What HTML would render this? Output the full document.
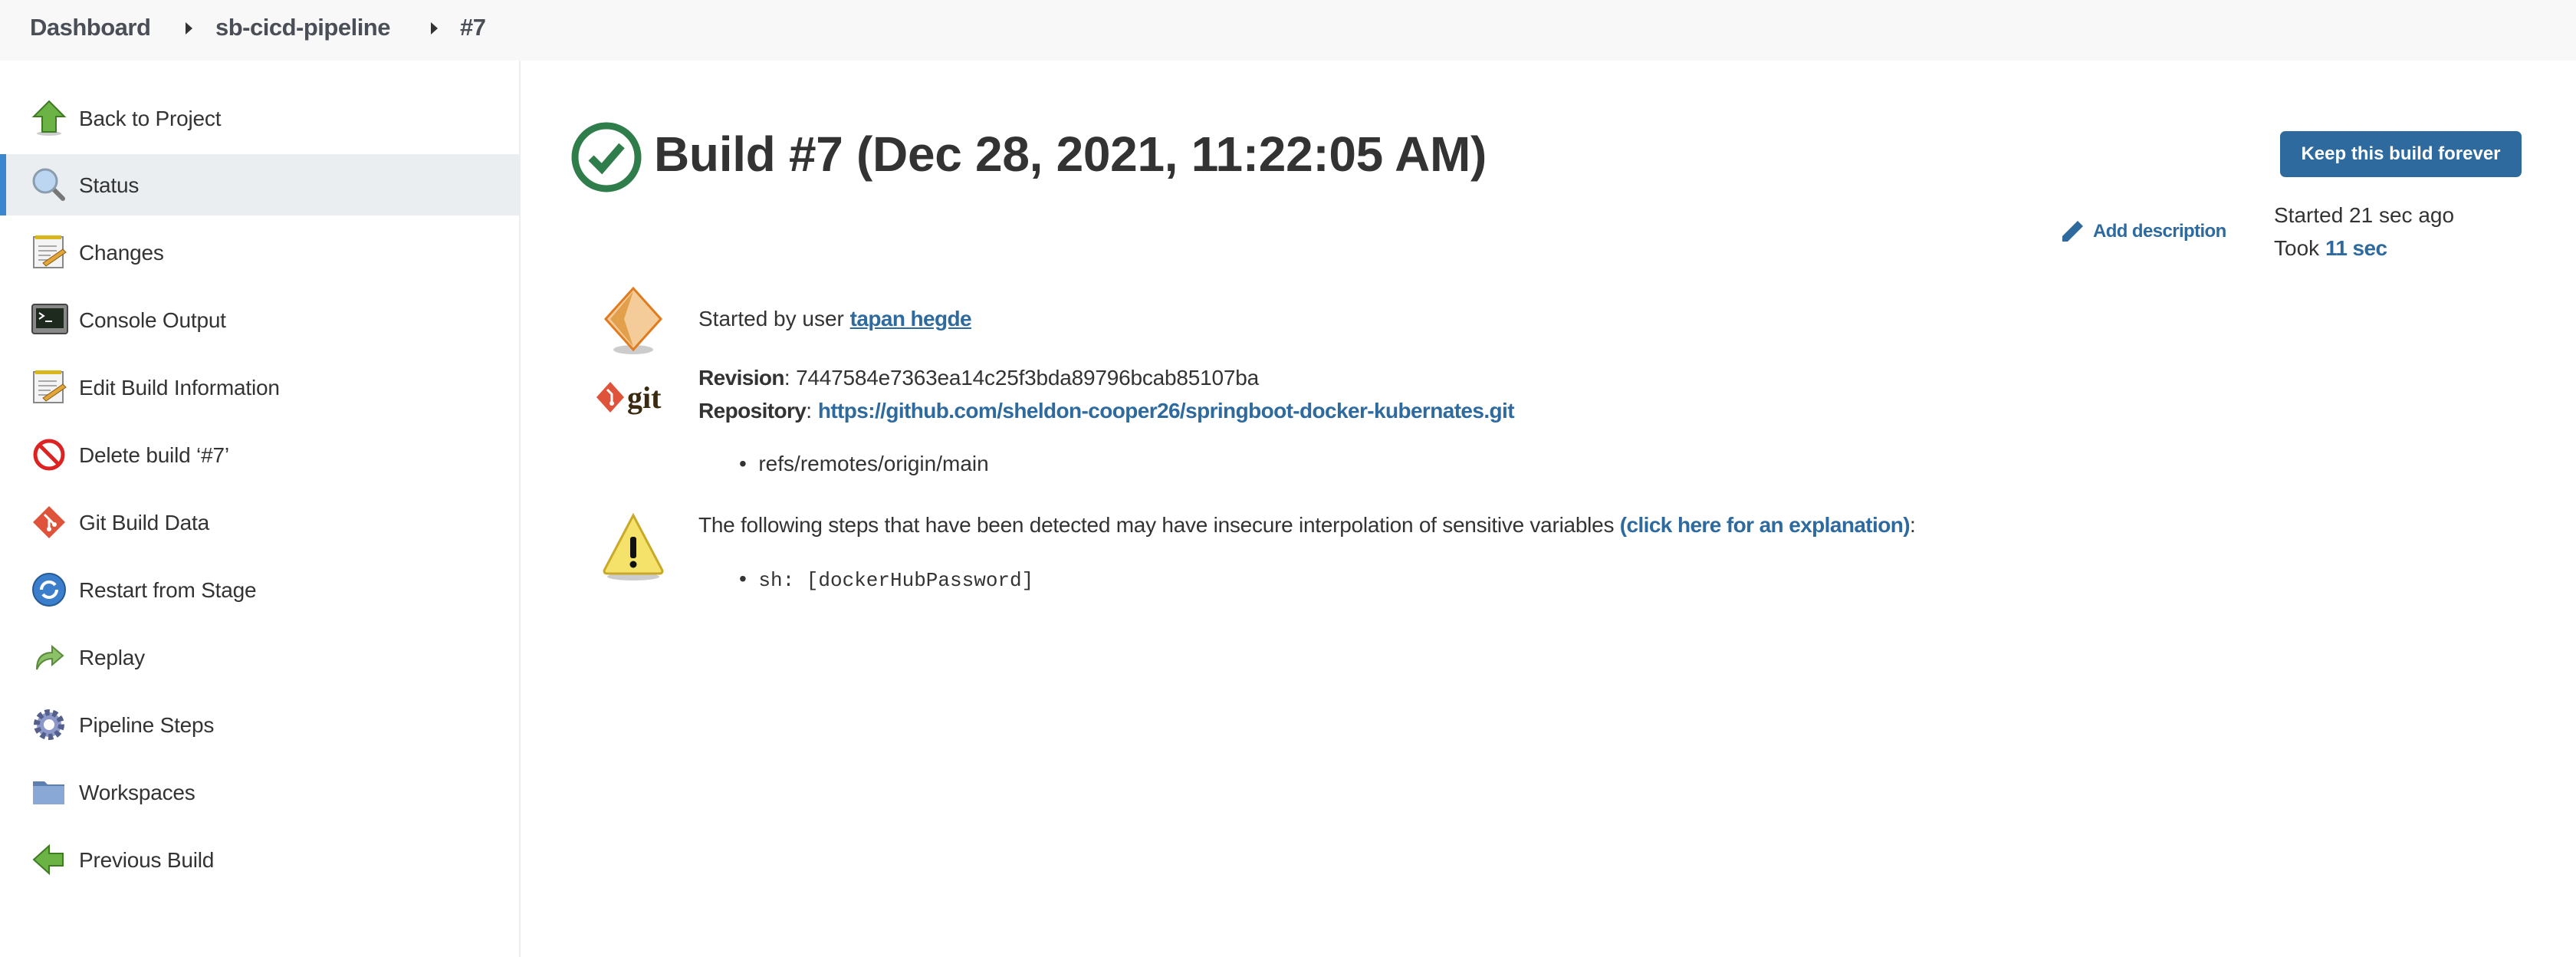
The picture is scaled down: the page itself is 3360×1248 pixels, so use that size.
<!DOCTYPE html>
<html><head><meta charset="utf-8"><style>
*{margin:0;padding:0;box-sizing:border-box}
body{width:3360px;height:1248px;background:#fff;font-family:"Liberation Sans",Arial,sans-serif;color:#333;position:relative;overflow:hidden}
.hdr{position:absolute;left:0;top:0;width:3360px;height:79px;background:#f8f8f8}
.bc{position:absolute;top:18px;font-size:31px;font-weight:bold;color:#4a4f57;letter-spacing:-0.5px}
.tri{position:absolute;top:29px;width:0;height:0;border-top:8px solid transparent;border-bottom:8px solid transparent;border-left:9px solid #333}
.side{position:absolute;left:0;top:79px;width:679px;height:1169px;border-right:2px solid #eceef0}
.it{position:absolute;left:0;width:677px;height:80px}
.it span{position:absolute;left:103px;top:25px;font-size:28px;color:#333;letter-spacing:-0.2px}
.it svg{position:absolute;left:40px;top:16px}
.sel{background:#eaeef1}
.sel:before{content:"";position:absolute;left:0;top:0;width:8px;height:80px;background:#3a87d0}
.t{position:absolute;font-size:28px;color:#333;white-space:nowrap}
a{color:#2e6a9e;text-decoration:none;font-weight:bold}
b,a{letter-spacing:-0.6px}
</style></head><body>
<div class="hdr">
<div class="bc" style="left:39px">Dashboard</div>
<div class="tri" style="left:242px"></div>
<div class="bc" style="left:281px">sb-cicd-pipeline</div>
<div class="tri" style="left:562px"></div>
<div class="bc" style="left:600px">#7</div>
</div>
<div class="side">
<div class="it" style="top:35px"><svg width="48" height="48" viewBox="0 0 48 48"><ellipse cx="24" cy="44" rx="16" ry="3" fill="#ccc"/><path d="M24 2 L44 22 H33 V42 H15 V22 H4 Z" fill="#6ab344" stroke="#3f7a24" stroke-width="2"/></svg><span>Back to Project</span></div>
<div class="it sel" style="top:122px"><svg width="48" height="48" viewBox="0 0 48 48"><line x1="28" y1="28" x2="42" y2="42" stroke="#777" stroke-width="6" stroke-linecap="round"/><circle cx="19" cy="19" r="15" fill="#bcd6f2" stroke="#8a9cae" stroke-width="3"/></svg><span>Status</span></div>
<div class="it" style="top:210px"><svg width="48" height="48" viewBox="0 0 48 48"><rect x="4" y="4" width="38" height="40" fill="#f4f4f4" stroke="#888" stroke-width="2"/><rect x="6" y="2" width="34" height="5" fill="#d8b620"/><path d="M10 16H34M10 22H34M10 28H26M10 34H22" stroke="#aaa" stroke-width="2"/><path d="M16 38 L42 20 L46 24 L20 42 Z" fill="#e2a53c" stroke="#8a5a10"/></svg><span>Changes</span></div>
<div class="it" style="top:298px"><svg width="50" height="48" viewBox="0 0 50 48"><rect x="2" y="4" width="46" height="38" rx="3" fill="#888" stroke="#444" stroke-width="2"/><rect x="7" y="9" width="36" height="26" fill="#1d2a1d"/><path d="M11 15 L17 19 L11 23 M19 26 H28" stroke="#fff" stroke-width="2" fill="none"/></svg><span>Console Output</span></div>
<div class="it" style="top:386px"><svg width="48" height="48" viewBox="0 0 48 48"><rect x="4" y="4" width="38" height="40" fill="#f4f4f4" stroke="#888" stroke-width="2"/><rect x="6" y="2" width="34" height="5" fill="#d8b620"/><path d="M10 16H34M10 22H34M10 28H26M10 34H22" stroke="#aaa" stroke-width="2"/><path d="M16 38 L42 20 L46 24 L20 42 Z" fill="#e2a53c" stroke="#8a5a10"/></svg><span>Edit Build Information</span></div>
<div class="it" style="top:474px"><svg width="48" height="48" viewBox="0 0 48 48"><circle cx="24" cy="24" r="18" fill="#fff" stroke="#d22" stroke-width="5"/><line x1="11" y1="11" x2="37" y2="37" stroke="#d22" stroke-width="5"/></svg><span>Delete build ‘#7’</span></div>
<div class="it" style="top:562px"><svg width="48" height="48" viewBox="0 0 48 48"><path d="M24 3 L45 24 L24 45 L3 24 Z" fill="#e0533b"/><path d="M18 14 L24 20 V32 M24 20 L31 27" stroke="#fff" stroke-width="3" fill="none"/><circle cx="24" cy="33" r="3" fill="#fff"/><circle cx="31" cy="27" r="3" fill="#fff"/></svg><span>Git Build Data</span></div>
<div class="it" style="top:650px"><svg width="48" height="48" viewBox="0 0 48 48"><circle cx="24" cy="24" r="21" fill="#3b7fcc" stroke="#245a95" stroke-width="2"/><path d="M14 24 A10 10 0 0 1 32 18 M34 24 A10 10 0 0 1 16 30" stroke="#fff" stroke-width="4" fill="none"/></svg><span>Restart from Stage</span></div>
<div class="it" style="top:738px"><svg width="48" height="48" viewBox="0 0 48 48"><path d="M8 40 C8 22 18 18 28 18 V10 L42 22 L28 34 V26 C20 26 12 30 8 40 Z" fill="#8cc168" stroke="#5a8a3a" stroke-width="2"/></svg><span>Replay</span></div>
<div class="it" style="top:826px"><svg width="48" height="48" viewBox="0 0 48 48"><circle cx="24" cy="24" r="16" fill="#8c98c8" stroke="#555f8c" stroke-width="8" stroke-dasharray="6 4"/><circle cx="24" cy="24" r="7" fill="#fff"/></svg><span>Pipeline Steps</span></div>
<div class="it" style="top:914px"><svg width="48" height="48" viewBox="0 0 48 48"><path d="M3 10 H18 L22 14 H44 V40 H3 Z" fill="#5a7fb0"/><rect x="3" y="16" width="41" height="24" fill="#8aa8d6"/></svg><span>Workspaces</span></div>
<div class="it" style="top:1002px"><svg width="48" height="48" viewBox="0 0 48 48"><path d="M4 24 L24 6 V16 H42 V32 H24 V42 Z" fill="#6ab344" stroke="#3f7a24" stroke-width="2"/></svg><span>Previous Build</span></div>
</div>

<svg style="position:absolute;left:744px;top:158px" width="94" height="94" viewBox="0 0 94 94"><circle cx="47" cy="47" r="41" fill="none" stroke="#2f7d4a" stroke-width="9"/><path d="M27 48 L41 62 L67 32" fill="none" stroke="#2f7d4a" stroke-width="10"/></svg>
<div class="t" style="left:853px;top:164px;font-size:64px;font-weight:bold;letter-spacing:-0.3px">Build #7 (Dec 28, 2021, 11:22:05 AM)</div>

<div style="position:absolute;left:2974px;top:171px;width:315px;height:60px;background:#2f6a9e;border-radius:7px;color:#fff;font-weight:bold;font-size:24px;text-align:center;line-height:60px">Keep this build forever</div>
<svg style="position:absolute;left:2688px;top:285px" width="32" height="32" viewBox="0 0 32 32"><path d="M2 30 V23 L22 3 L29 10 L9 30 Z" fill="#2e6a9e"/></svg>
<div class="t" style="left:2730px;top:288px;font-size:24px"><a>Add description</a></div>
<div class="t" style="left:2966px;top:265px;font-size:28px">Started 21 sec ago</div>
<div class="t" style="left:2966px;top:308px;font-size:28px">Took <a>11 sec</a></div>

<svg style="position:absolute;left:784px;top:372px" width="84" height="92" viewBox="0 0 84 92"><ellipse cx="42" cy="84" rx="26" ry="6" fill="#ccc"/><path d="M42 4 L78 44 L42 84 L6 44 Z" fill="#f4cc99" stroke="#e07b20" stroke-width="3"/><path d="M42 8 L30 44 L42 80 L12 44 Z" fill="#e3a04c"/></svg>
<div class="t" style="left:911px;top:400px">Started by user <a style="text-decoration:underline">tapan hegde</a></div>

<svg style="position:absolute;left:776px;top:494px" width="100" height="50" viewBox="0 0 100 50"><path d="M20 4 L38 24 L20 44 L2 24 Z" fill="#e0533b"/><path d="M16 14 L22 20 V32" stroke="#fff" stroke-width="3" fill="none"/><circle cx="22" cy="32" r="3" fill="#fff"/><text x="42" y="38" font-family="Liberation Serif,serif" font-weight="bold" font-size="40" fill="#3a2a10">git</text></svg>
<div class="t" style="left:911px;top:477px;letter-spacing:-0.2px"><b>Revision</b>: 7447584e7363ea14c25f3bda89796bcab85107ba</div>
<div class="t" style="left:911px;top:520px"><b>Repository</b>: <a>https://github.com/sheldon-cooper26/springboot-docker-kubernates.git</a></div>
<div class="t" style="left:964px;top:589px">•&nbsp; refs/remotes/origin/main</div>

<svg style="position:absolute;left:784px;top:668px" width="84" height="90" viewBox="0 0 84 90"><ellipse cx="42" cy="84" rx="34" ry="5" fill="#ccc"/><path d="M42 4 L80 76 Q80 80 76 80 H8 Q4 80 4 76 Z" fill="#f5e26a" stroke="#c9a92a" stroke-width="3"/><rect x="38" y="32" width="8" height="28" rx="3" fill="#111"/><circle cx="42" cy="68" r="4.5" fill="#111"/></svg>
<div class="t" style="left:911px;top:669px;letter-spacing:-0.25px">The following steps that have been detected may have insecure interpolation of sensitive variables <a>(click here for an explanation)</a>:</div>
<div class="t" style="left:964px;top:739px">•&nbsp; <span style="font-family:'Liberation Mono',monospace;font-size:26px">sh: [dockerHubPassword]</span></div>
</body></html>
